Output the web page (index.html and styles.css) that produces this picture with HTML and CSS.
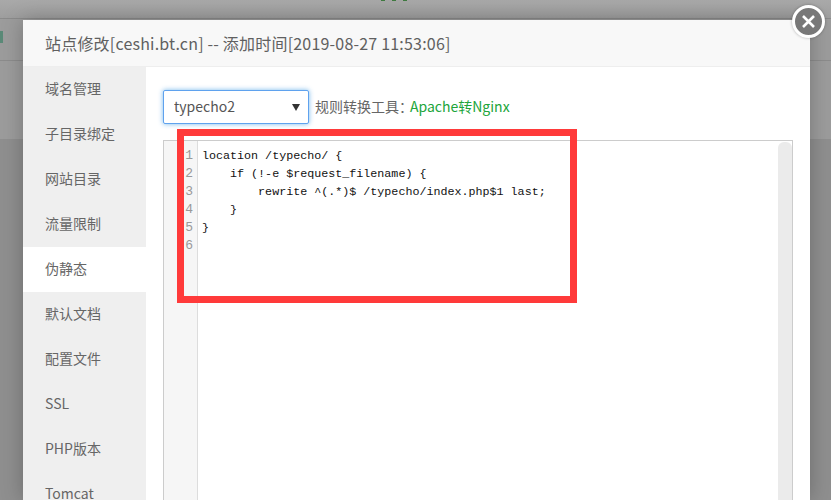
FILE: index.html
```html
<!DOCTYPE html>
<html lang="zh-CN">
<head>
<meta charset="utf-8">
<title>站点修改</title>
<link rel="stylesheet" href="styles.css">
</head>
<body>
<div class="backdrop">
  <div class="bg-top"><i class="speck"></i><i class="speck"></i><i class="speck"></i></div>
  <div class="bg-band"><i class="bg-mark"></i></div>
  <div class="bg-rest"></div>
</div>
<section class="dialog">
  <header class="dialog-title">站点修改[ceshi.bt.cn] -- 添加时间[2019-08-27 11:53:06]</header>
  <div class="dialog-body">
    <nav class="side">
      <a class="side-item">域名管理</a>
      <a class="side-item">子目录绑定</a>
      <a class="side-item">网站目录</a>
      <a class="side-item">流量限制</a>
      <a class="side-item active">伪静态</a>
      <a class="side-item">默认文档</a>
      <a class="side-item">配置文件</a>
      <a class="side-item">SSL</a>
      <a class="side-item">PHP版本</a>
      <a class="side-item">Tomcat</a>
    </nav>
    <main class="content">
      <div class="toolbar">
        <div class="select-wrap">
          <select class="select"><option>typecho2</option></select>
        </div>
        <span class="tool-label">规则转换工具<span class="colon">：</span><a class="tool-link">Apache转Nginx</a></span>
      </div>
      <div class="editor">
        <div class="gutter">
          <div>1</div><div>2</div><div>3</div><div>4</div><div>5</div><div>6</div>
        </div>
<pre class="code">location /typecho/ {
    if (!-e $request_filename) {
        rewrite ^(.*)$ /typecho/index.php$1 last;
    }
}
</pre>
        <div class="scrollbar"></div>
      </div>
    </main>
  </div>
  <div class="highlight"></div>
</section>
<button class="close" aria-label="关闭">
  <svg width="17" height="17" viewBox="0 0 17 17"><path d="M3 3L14 14M14 3L3 14" stroke="#fff" stroke-width="2.6" fill="none"/></svg>
</button>
</body>
</html>
```
FILE: styles.css
```css
* { box-sizing: border-box; }
html, body { margin: 0; height: 500px; overflow: hidden; }
body {
  font-family: "Noto Sans CJK SC", "Noto Sans", sans-serif;
  font-size: 14px;
  color: #666;
  background: #999;
  position: relative;
}
.backdrop { height: 500px; display: flex; flex-direction: column; }
.bg-top {
  height: 19px;
  background: linear-gradient(#a9a9a9, #9e9e9e);
  border-bottom: 1px solid #8a8a8a;
  display: flex;
  gap: 7px;
  padding-left: 381px;
}
.speck { width: 4px; height: 1px; background: #3f7a40; }
.bg-band {
  height: 42px;
  background: #9c9c9c;
  border-bottom: 1px solid #8c8c8c;
  padding-top: 12px;
}
.bg-mark { display: block; width: 3px; height: 12px; background: #5b8a78; }
.bg-rest {
  flex: 1;
  background: linear-gradient(#9c9c9c 78px, #8f8f8f 78px);
}
.dialog {
  position: absolute;
  left: 23px;
  top: 20px;
  width: 787px;
  height: 480px;
  background: #fff;
  box-shadow: 0 0 20px rgba(0, 0, 0, .25);
  overflow: hidden;
}
.dialog-title {
  height: 47px;
  padding-left: 22px;
  line-height: 46px;
  font-size: 16px;
  letter-spacing: .2px;
  background: #f8f8f8;
  border-bottom: 1px solid #eee;
  white-space: nowrap;
  color: #606060;
}
.dialog-body { display: flex; height: 433px; }
.side { width: 123px; background: #efefef; display: flex; flex-direction: column; overflow: hidden; }
.side-item { height: 45px; flex: none; line-height: 14px; padding: 14px 0 0 22px; }
.side-item:last-child { height: 28px; }
.side-item.active { background: #fff; }
.content { flex: 1; padding: 23px 17px 0; overflow: hidden; }
.toolbar { display: flex; align-items: center; gap: 6px; }
.select-wrap { position: relative; width: 146px; height: 34px; }
.select-wrap::after {
  content: "";
  position: absolute;
  right: 9px;
  top: 14px;
  border-left: 4px solid transparent;
  border-right: 4px solid transparent;
  border-top: 7px solid #333;
}
.select {
  appearance: none;
  width: 100%;
  height: 100%;
  font: inherit;
  color: #555;
  padding: 0 0 2px 10px;
  background: #fff;
  border: 1px solid #5fa2ee;
  border-radius: 2px;
  box-shadow: 0 0 5px rgba(102, 175, 233, .9);
  outline: none;
}
.tool-label { color: #666; font-size: 14px; line-height: 18px; margin-bottom: 2px; }
.colon { letter-spacing: -3px; }
.tool-link { color: #20a53a; }
.editor {
  margin-top: 16px;
  width: 630px;
  height: 420px;
  border: 1px solid #ccc;
  display: flex;
  position: relative;
  font-family: "Liberation Mono", monospace;
  font-size: 11.7px;
  line-height: 18px;
}
.gutter {
  width: 34px;
  flex: none;
  background: #f6f6f6;
  border-right: 1px solid #ddd;
  padding: 6px 4px 0 0;
  text-align: right;
  color: #999;
  font-size: 13px;
}
.code { margin: 0; padding: 6px 0 0 4px; font: inherit; color: #111; }
.scrollbar {
  position: absolute;
  right: 0;
  top: 1px;
  bottom: 0;
  width: 14px;
  background: #ebebeb;
  border-radius: 6px 6px 0 0;
}
.highlight {
  position: absolute;
  left: 154px;
  top: 109px;
  width: 400px;
  height: 174px;
  border: 7px solid #ff3a3a;
}
.close {
  position: absolute;
  left: 792px;
  top: 5px;
  width: 33px;
  height: 33px;
  padding: 0;
  border: 3px solid #fff;
  border-radius: 50%;
  background: #787878;
  display: flex;
  align-items: center;
  justify-content: center;
  box-shadow: 0 0 3px rgba(0, 0, 0, .3);
}
```
